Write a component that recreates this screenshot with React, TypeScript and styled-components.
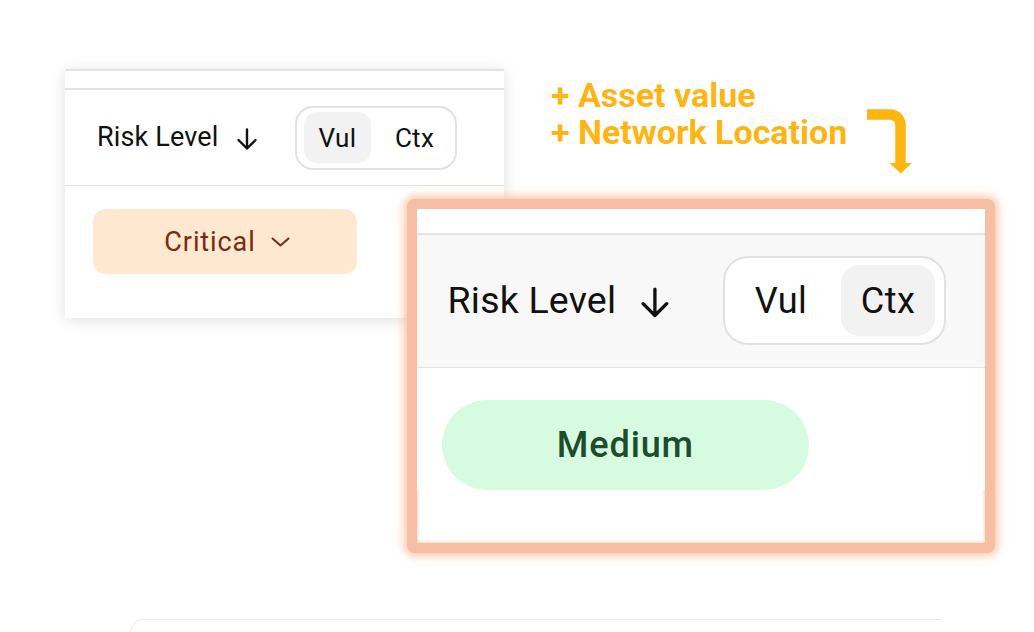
import React from "react";
import styled, { createGlobalStyle } from "styled-components";

const GlobalStyle = createGlobalStyle`
  html, body { margin: 0; padding: 0; background: #ffffff; }
  body { font-family: Roboto, "Liberation Sans", sans-serif; }
`;

// every size inside a card is expressed in card units so one card can be shown magnified
const u = (n: number) => `calc(${n} * var(--u))`;

const Canvas = styled.div`
  position: relative;
  width: 1034px;
  height: 632px;
  overflow: hidden;
  background: #ffffff;
`;

const Card = styled.div<{ $unit: number; $edge?: boolean }>`
  --u: ${(p) => p.$unit}px;
  display: flex;
  flex-direction: column;
  background: #ffffff;
  font-family: Roboto, "Liberation Sans", sans-serif;
  color: #111111;
  border-top: ${(p) => (p.$edge ? "2px solid #e2e2e2" : "none")};
`;

const BaseCard = styled(Card)`
  position: absolute;
  left: 65px;
  top: 69px;
  width: 439px;
  height: 247px;
  box-shadow: 0 2px 14px rgba(0, 0, 0, 0.13);
  z-index: 1;
`;

const ZoomFrame = styled.div`
  position: absolute;
  left: 407px;
  top: 199px;
  width: 568px;
  height: 334px;
  border: 10px solid #f6bea2;
  border-radius: 8px;
  box-shadow: 0 0 9px 3px rgba(246, 182, 152, 0.8),
    inset 0 0 3px 1px rgba(246, 190, 162, 0.6);
  overflow: hidden;
  background: #ffffff;
  z-index: 2;
`;

const ZoomedCard = styled(Card)`
  width: 620px;
  margin-left: -14px;
`;

const TopStrip = styled.div`
  height: ${u(17)};
  border-bottom: ${u(2)} solid #e3e3e3;
`;

const HeaderRow = styled.div<{ $tint?: boolean }>`
  display: flex;
  align-items: center;
  height: ${u(95)};
  padding-left: ${u(32)};
  background: ${(p) => (p.$tint ? "#f8f8f8" : "#ffffff")};
  border-bottom: ${u(1.3)} solid #e4e4e4;
`;

const TitleGroup = styled.div`
  display: flex;
  align-items: center;
  gap: ${u(18)};
  width: ${u(198)};
`;

const Title = styled.span`
  font-size: ${u(27)};
  font-weight: 400;
  letter-spacing: ${u(0.15)};
  line-height: 1;
`;

const SortIcon = styled.svg`
  width: ${u(20)};
  height: ${u(22)};
  margin-top: ${u(3)};
  flex: none;
`;

const Toggle = styled.div`
  display: flex;
  align-items: center;
  gap: ${u(10)};
  height: ${u(64)};
  box-sizing: border-box;
  padding: 0 ${u(7)};
  border: ${u(2)} solid #e1e1e1;
  border-radius: ${u(18)};
  background: #ffffff;
`;

const Tab = styled.div<{ $active?: boolean }>`
  display: flex;
  align-items: center;
  justify-content: center;
  width: ${u(67)};
  height: ${u(51)};
  border-radius: ${u(13)};
  background: ${(p) => (p.$active ? "#f2f2f2" : "transparent")};
  font-size: ${u(26)};
  letter-spacing: ${u(0.3)};
  color: #111111;
`;

const Body = styled.div`
  padding: ${u(23)} 0 0 ${u(28)};
`;

const Badge = styled.div<{ $tone: "critical" | "medium" }>`
  display: flex;
  align-items: center;
  justify-content: center;
  gap: ${u(15)};
  width: ${u(264)};
  height: ${u(65)};
  border-radius: ${(p) => (p.$tone === "medium" ? u(33) : u(13))};
  background: ${(p) => (p.$tone === "medium" ? "#d7fbe1" : "#fee8d0")};
  color: ${(p) => (p.$tone === "medium" ? "#1c4d2c" : "#7a2912")};
  font-size: ${(p) => (p.$tone === "medium" ? u(26) : u(27))};
  font-weight: ${(p) => (p.$tone === "medium" ? 500 : 400)};
  letter-spacing: ${(p) => (p.$tone === "medium" ? u(0.6) : u(0.9))};
  padding-left: ${(p) => (p.$tone === "medium" ? "0" : u(4))};
  box-sizing: border-box;
`;

const Chevron = styled.svg`
  width: ${u(19)};
  height: ${u(10)};
  flex: none;
`;

const Note = styled.div`
  position: absolute;
  left: 551px;
  top: 77px;
  font-family: Roboto, "Liberation Sans", sans-serif;
  font-weight: 700;
  font-size: 34px;
  line-height: 37px;
  color: #fdb515;
  white-space: nowrap;
`;

const BendArrow = styled.svg`
  position: absolute;
  left: 860px;
  top: 100px;
  width: 60px;
  height: 80px;
`;

const NextCard = styled.div`
  position: absolute;
  left: 130px;
  top: 619px;
  width: 810px;
  height: 40px;
  border-top: 1.5px solid #ececec;
  border-left: 1.5px solid #ececec;
  border-top-left-radius: 14px;
`;

type RowProps = {
  tinted?: boolean;
  active: "Vul" | "Ctx";
  tone: "critical" | "medium";
};

const RiskColumn = ({ tinted, active, tone }: RowProps) => (
  <>
    <TopStrip />
    <HeaderRow $tint={tinted}>
      <TitleGroup>
        <Title>Risk Level</Title>
        <SortIcon viewBox="0 0 20 22" fill="none" stroke="#111111" strokeWidth={2.4} strokeLinecap="round" strokeLinejoin="round">
          <path d="M10 1.5V20.5M1.5 12L10 20.5L18.5 12" />
        </SortIcon>
      </TitleGroup>
      <Toggle>
        <Tab $active={active === "Vul"}>Vul</Tab>
        <Tab $active={active === "Ctx"}>Ctx</Tab>
      </Toggle>
    </HeaderRow>
    <Body>
      {tone === "critical" ? (
        <Badge $tone="critical">
          Critical
          <Chevron viewBox="0 0 19 10" fill="none" stroke="#7a2912" strokeWidth={2} strokeLinecap="round" strokeLinejoin="round">
            <path d="M1.5 1.5L9.5 8.5L17.5 1.5" />
          </Chevron>
        </Badge>
      ) : (
        <Badge $tone="medium">Medium</Badge>
      )}
    </Body>
  </>
);

export default function App() {
  return (
    <>
      <GlobalStyle />
      <Canvas>
        <BaseCard $unit={1} $edge>
          <RiskColumn active="Vul" tone="critical" />
        </BaseCard>

        <Note>
          + Asset value
          <br />+ Network Location
        </Note>

        <BendArrow viewBox="860 100 60 80">
          <path d="M867 114.5H890A10.5 10.5 0 0 1 900.5 125V164" fill="none" stroke="#fcb511" strokeWidth={10.5} />
          <path d="M889.5 163H912L900.75 173.5Z" fill="#fcb511" />
        </BendArrow>

        <ZoomFrame>
          <ZoomedCard $unit={1.39}>
            <RiskColumn tinted active="Ctx" tone="medium" />
          </ZoomedCard>
        </ZoomFrame>

        <NextCard />
      </Canvas>
    </>
  );
}
